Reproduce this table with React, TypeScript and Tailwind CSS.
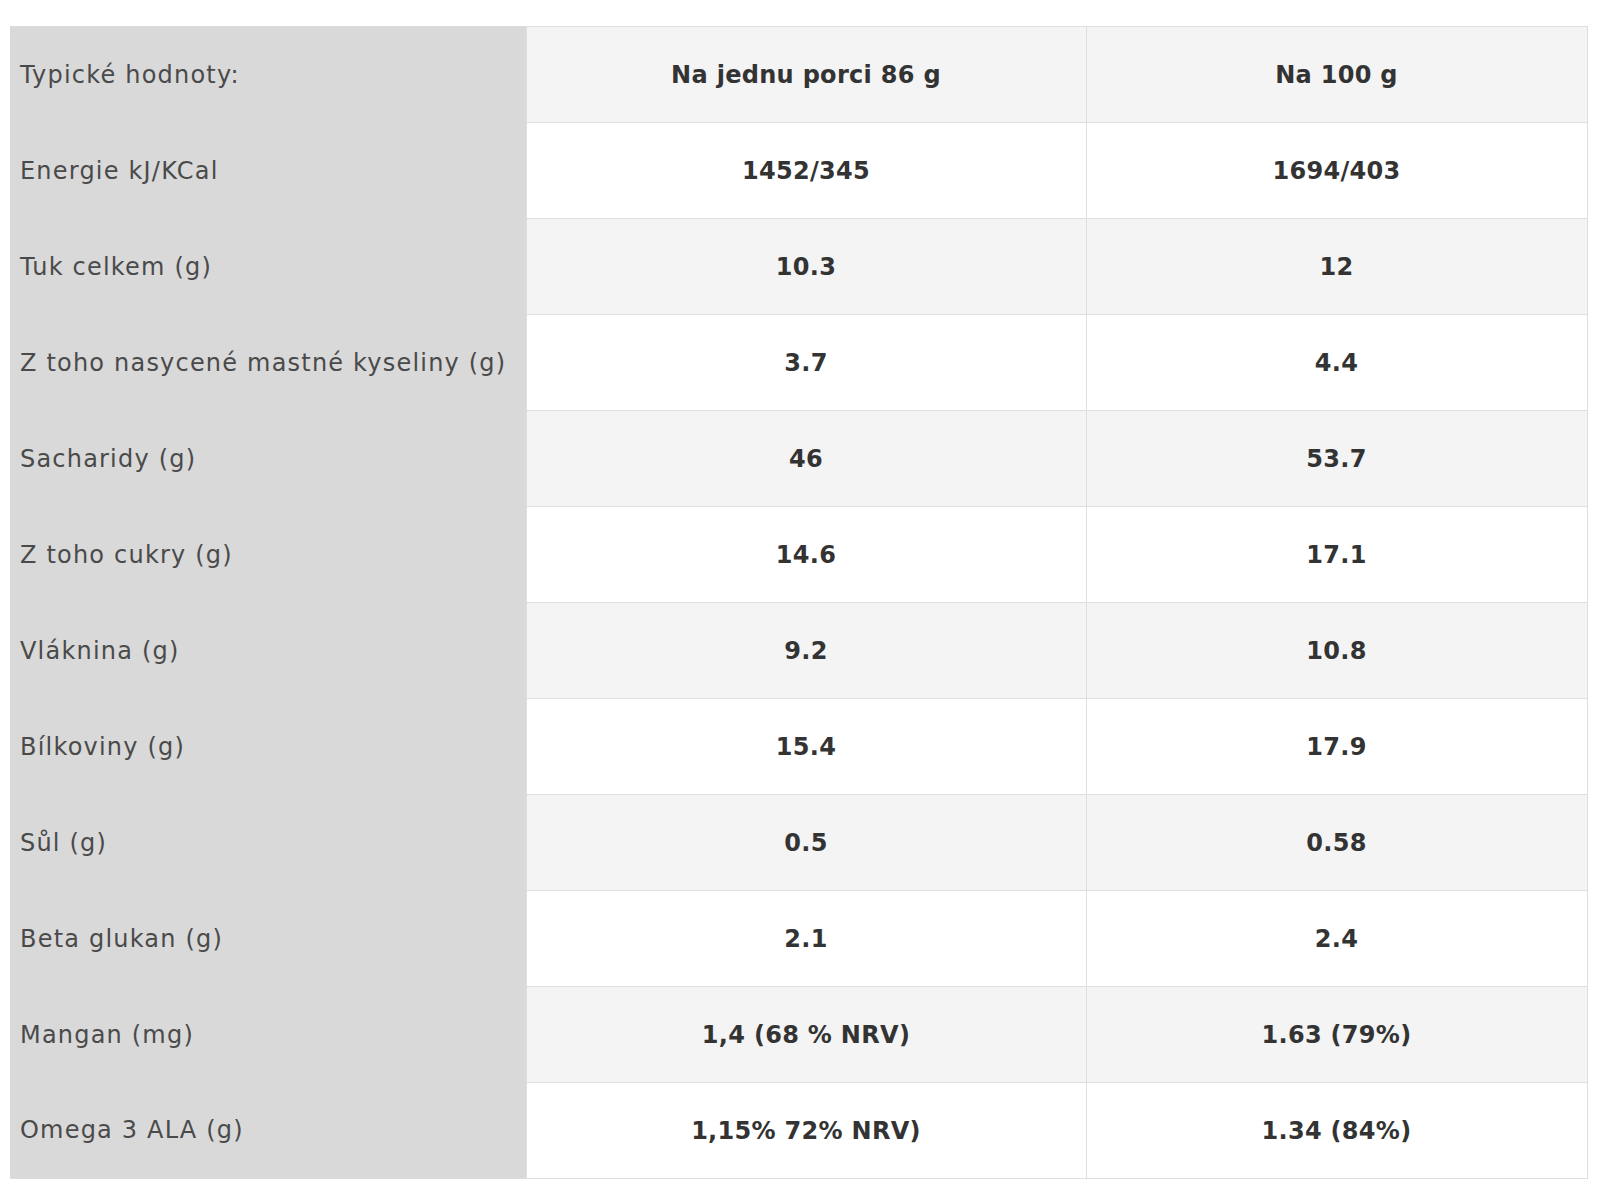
import React from "react";

const rows: [string, string, string][] = [
  ["Energie kJ/KCal", "1452/345", "1694/403"],
  ["Tuk celkem (g)", "10.3", "12"],
  ["Z toho nasycené mastné kyseliny (g)", "3.7", "4.4"],
  ["Sacharidy (g)", "46", "53.7"],
  ["Z toho cukry (g)", "14.6", "17.1"],
  ["Vláknina (g)", "9.2", "10.8"],
  ["Bílkoviny (g)", "15.4", "17.9"],
  ["Sůl (g)", "0.5", "0.58"],
  ["Beta glukan (g)", "2.1", "2.4"],
  ["Mangan (mg)", "1,4 (68 % NRV)", "1.63 (79%)"],
  ["Omega 3 ALA (g)", "1,15% 72% NRV)", "1.34 (84%)"],
];

export default function App() {
  return (
    <div className="min-h-[1200px] bg-white pl-[10px] pt-[26px]" style={{ fontFamily: '"DejaVu Sans", "Liberation Sans", sans-serif' }}>
      <table className="border-collapse text-[24px] tracking-[0.3px]">
        <tbody>
          <tr className="h-[96px]">
            <td className="w-[516px] bg-[#d9d9d9] border-t border-[#dcdcdc] px-[10px] text-left text-[#4a4a4a] tracking-[1.2px]">Typické hodnoty:</td>
            <td className="w-[560px] bg-[#f4f4f4] border border-[#dedede] text-center font-bold text-[#333]">Na jednu porci 86 g</td>
            <td className="w-[501px] bg-[#f4f4f4] border border-[#dedede] text-center font-bold text-[#333]">Na 100 g</td>
          </tr>
          {rows.map(([a, b, c], i) => {
            const bg = i % 2 === 0 ? "bg-white" : "bg-[#f4f4f4]";
            const last = i === rows.length - 1;
            return (
              <tr key={a} className="h-[96px]">
                <td className={`bg-[#d9d9d9] px-[10px] text-left text-[#4a4a4a] tracking-[1.2px] whitespace-nowrap ${last ? "border-b border-[#dcdcdc]" : ""}`}>{a}</td>
                <td className={`${bg} border border-[#dedede] text-center font-bold text-[#333]`}>{b}</td>
                <td className={`${bg} border border-[#dedede] text-center font-bold text-[#333]`}>{c}</td>
              </tr>
            );
          })}
        </tbody>
      </table>
    </div>
  );
}
